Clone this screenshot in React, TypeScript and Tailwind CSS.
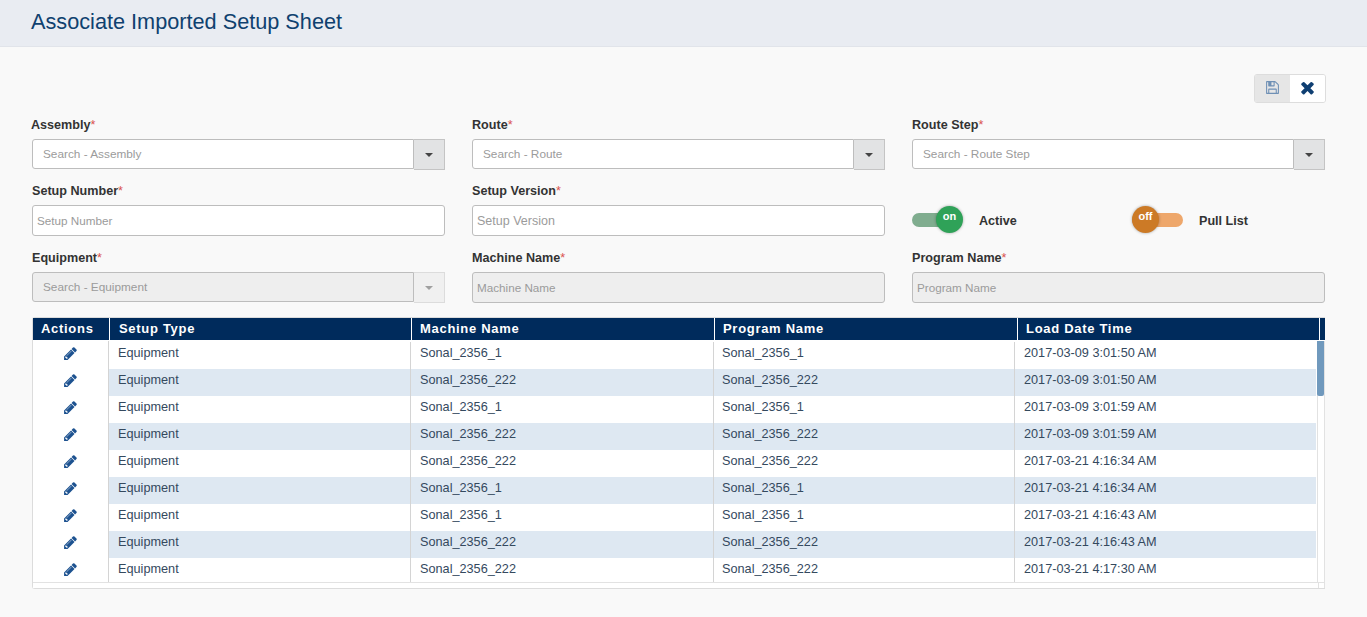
import React from "react";

const PENCIL = "M491 1536l91-91-235-235-91 91v107h128v128h107zm523-928q0-22-22-22-10 0-17 7l-542 542q-7 7-7 17 0 22 22 22 10 0 17-7l542-542q7-7 7-17zm-54-192l416 416-832 832h-416v-416zm683 96q0 53-37 90l-166 166-416-416 166-165q36-38 90-38 53 0 91 38l235 234q37 39 37 91z";
const SAVE = "M512 1536h768v-384h-768v384zm896 0h128v-896q0-14-10-38.5t-20-34.5l-281-281q-10-10-34-20t-39-10v416q0 40-28 68t-68 28h-576q-40 0-68-28t-28-68v-416h-128v1280h128v-416q0-40 28-68t68-28h832q40 0 68 28t28 68v416zm-384-928v-320q0-13-9.5-22.5t-22.5-9.5h-192q-13 0-22.5 9.5t-9.5 22.5v320q0 13 9.5 22.5t22.5 9.5h192q13 0 22.5-9.5t9.5-22.5zm640 32v928q0 40-28 68t-68 28h-1344q-40 0-68-28t-28-68v-1344q0-40 28-68t68-28h928q40 0 88 20t76 48l280 280q28 28 48 76t20 88z";
const TIMES = "M1490 1322q0 40-28 68l-136 136q-28 28-68 28t-68-28l-294-294-294 294q-28 28-68 28t-68-28l-136-136q-28-28-28-68t28-68l294-294-294-294q-28-28-28-68t28-68l136-136q28-28 68-28t68 28l294 294 294-294q28-28 68-28t68 28l136 136q28 28 28 68t-28 68l-294 294 294 294q28 28 28 68z";

function Fa({ d, className }: { d: string; className: string }) {
  return (
    <svg viewBox="0 0 1792 1792" className={className} fill="currentColor" aria-hidden="true">
      <path d={d} />
    </svg>
  );
}

function Label({ text, className = "" }: { text: string; className?: string }) {
  return (
    <div className={`h-4 mb-[7px] pt-px text-[12.6px] leading-4 font-bold text-[#333] ${className}`}>
      {text}
      <span className="text-[#d9534f] font-normal">*</span>
    </div>
  );
}

function SelectField({ label, placeholder, disabled = false, labelClass = "" }: { label: string; placeholder: string; disabled?: boolean; labelClass?: string }) {
  return (
    <div>
      <Label text={label} className={labelClass} />
      <div className="flex h-[31px]">
        <input
          disabled={disabled}
          placeholder={placeholder}
          className={`flex-1 min-w-0 h-[30px] pl-[10px] text-[11.8px] rounded-l-[3px] border border-[#bdbdbd] outline-none placeholder:text-[#9b9b9b] ${disabled ? "bg-[#eeeeee]" : "bg-white"}`}
        />
        <div className={`w-[31px] flex items-center justify-center border border-l-0 ${disabled ? "bg-[#f0f0f0] border-[#dcdcdc]" : "bg-[#e2e3e4] border-[#c4c4c4]"}`}>
          <span className={`w-0 h-0 border-x-[4px] border-x-transparent border-t-[4px] ${disabled ? "border-t-[#a0a0a0]" : "border-t-[#444]"}`} />
        </div>
      </div>
    </div>
  );
}

function TextField({ label, placeholder, disabled = false, inputClass = "text-[11.7px]" }: { label: string; placeholder: string; disabled?: boolean; inputClass?: string }) {
  return (
    <div>
      <Label text={label} />
      <input
        disabled={disabled}
        placeholder={placeholder}
        className={`block w-full h-[31px] pl-1 rounded-[3px] border border-[#bdbdbd] outline-none placeholder:text-[#9b9b9b] ${inputClass} ${disabled ? "bg-[#eeeeee]" : "bg-white"}`}
      />
    </div>
  );
}

function Toggle({ on, label, className = "" }: { on: boolean; label: string; className?: string }) {
  return (
    <div className={`flex items-center ${className}`}>
      <div className={`relative h-[14px] ${on ? "w-[40px] bg-[#80ad8f]" : "w-[51px] bg-[#eea76b]"} rounded-full`}>
        <div
          className={`absolute top-[-7px] w-[27px] h-[27px] rounded-full flex justify-center pt-[3px] text-[11px] leading-[14px] font-bold text-white shadow-[0_0_3px_rgba(0,0,0,0.35)] ${on ? "left-[24px] bg-[#2fa258]" : "left-0 bg-[#cc7a26]"}`}
        >
          {on ? "on" : "off"}
        </div>
      </div>
      <span className={`mt-[2px] text-[12.6px] font-bold text-[#333] ${on ? "ml-[27px]" : "ml-[16px]"}`}>{label}</span>
    </div>
  );
}

const rows = [
  ["Sonal_2356_1", "2017-03-09 3:01:50 AM"],
  ["Sonal_2356_222", "2017-03-09 3:01:50 AM"],
  ["Sonal_2356_1", "2017-03-09 3:01:59 AM"],
  ["Sonal_2356_222", "2017-03-09 3:01:59 AM"],
  ["Sonal_2356_222", "2017-03-21 4:16:34 AM"],
  ["Sonal_2356_1", "2017-03-21 4:16:34 AM"],
  ["Sonal_2356_1", "2017-03-21 4:16:43 AM"],
  ["Sonal_2356_222", "2017-03-21 4:16:43 AM"],
  ["Sonal_2356_222", "2017-03-21 4:17:30 AM"],
];

const headerCell = "h-full flex items-center border-r border-white";
const bodyCell = "h-full leading-[17px] border-r border-[#d4d4d4]";

export default function App() {
  return (
    <div className="h-[617px] overflow-hidden bg-[#f9f9f9] font-['Liberation_Sans',Arial,sans-serif]">
      <header className="h-[47px] bg-[#e9ecf2] border-b border-[#e1e4ea] pl-[31px] text-[21.7px] leading-[43px] text-[#0f416f]">
        Associate Imported Setup Sheet
      </header>

      <div className="pl-[32px] pr-[41px]">
        <div className="flex justify-end mt-[27px] h-[29px]">
          <div className="flex rounded-[3px] border border-[#dddddd] overflow-hidden">
            <div className="w-[35px] bg-[#e6e6e6] flex items-center justify-center pb-[2px]">
              <Fa d={SAVE} className="w-[15px] h-[15px] text-[#6f90b5]" />
            </div>
            <div className="w-[35px] bg-white flex items-center justify-center pb-[2px]">
              <Fa d={TIMES} className="w-[19px] h-[19px] text-[#0f3f72]" />
            </div>
          </div>
        </div>

        <div className="grid grid-cols-[413px_413px_413px] gap-x-[27px] mt-[13px]">
          <SelectField label="Assembly" placeholder="Search - Assembly" labelClass="-ml-px" />
          <SelectField label="Route" placeholder="Search - Route" />
          <SelectField label="Route Step" placeholder="Search - Route Step" />
        </div>

        <div className="grid grid-cols-[413px_413px_413px] gap-x-[27px] mt-[12px]">
          <TextField label="Setup Number" placeholder="Setup Number" />
          <TextField label="Setup Version" placeholder="Setup Version" inputClass="text-[12.5px]" />
          <div className="flex items-center pt-[23px]">
            <Toggle on label="Active" className="w-[220px]" />
            <Toggle on={false} label="Pull List" />
          </div>
        </div>

        <div className="grid grid-cols-[413px_413px_413px] gap-x-[27px] mt-[13px]">
          <SelectField label="Equipment" placeholder="Search - Equipment" disabled />
          <TextField label="Machine Name" placeholder="Machine Name" disabled />
          <TextField label="Program Name" placeholder="Program Name" disabled />
        </div>

        <div className="mt-[14px] w-[1293px] h-[272px] border-l border-y border-[#dcdcdc] rounded-l-[3px] bg-white">
          <div className="flex h-[23px] border-b border-white bg-[#002b5c] text-white text-[13px] font-bold tracking-[0.7px]">
            <div className={`${headerCell} w-[77px] pl-[8px]`}>Actions</div>
            <div className={`${headerCell} w-[302px] pl-[9px]`}>Setup Type</div>
            <div className={`${headerCell} w-[303px] pl-[8px]`}>Machine Name</div>
            <div className={`${headerCell} w-[303px] pl-[8px]`}>Program Name</div>
            <div className={`${headerCell} w-[302px] pl-[8px]`}>Load Date Time</div>
            <div className="flex-1" />
          </div>

          <div className="flex h-[241px]">
            <div className="w-[1284px] overflow-hidden text-[12.7px] text-[#34495e]">
              {rows.map(([name, date], i) => (
                <div key={i} className={`flex ${i === 0 ? "h-[28px]" : "h-[27px]"}`}>
                  <div className={`w-[76px] h-full flex justify-center bg-white border-r border-[#d4d4d4] ${i === 0 ? "pt-[5px]" : "pt-[4px]"}`}>
                    <Fa d={PENCIL} className="w-[15px] h-[15px] text-[#1d5290]" />
                  </div>
                  <div className={`flex-1 flex ${i === 0 ? "pt-px" : ""} ${i % 2 === 1 ? "bg-[#dee8f2]" : "bg-white"}`}>
                    <div className={`${bodyCell} w-[302px] pl-[9px] pt-[3px]`}>Equipment</div>
                    <div className={`${bodyCell} w-[303px] pl-[9px] pt-[3px]`}>{name}</div>
                    <div className={`${bodyCell} w-[301px] pl-[8px] pt-[3px]`}>{name}</div>
                    <div className={`${bodyCell} flex-1 border-r-0 pl-[9px] pt-[3px]`}>{date}</div>
                  </div>
                </div>
              ))}
            </div>
            <div className="flex-1 pl-px bg-white">
              <div className="h-full border-x border-[#e2e2e2]">
                <div className="w-[7px] h-[55px] -ml-px bg-[#7099bd] rounded-b-[2px]" />
              </div>
            </div>
          </div>

          <div className="flex h-[6px] border-t border-[#e2e2e2] bg-white">
            <div className="flex-1" />
            <div className="w-[7px] border-x border-[#e2e2e2]" />
          </div>
        </div>
      </div>
    </div>
  );
}
